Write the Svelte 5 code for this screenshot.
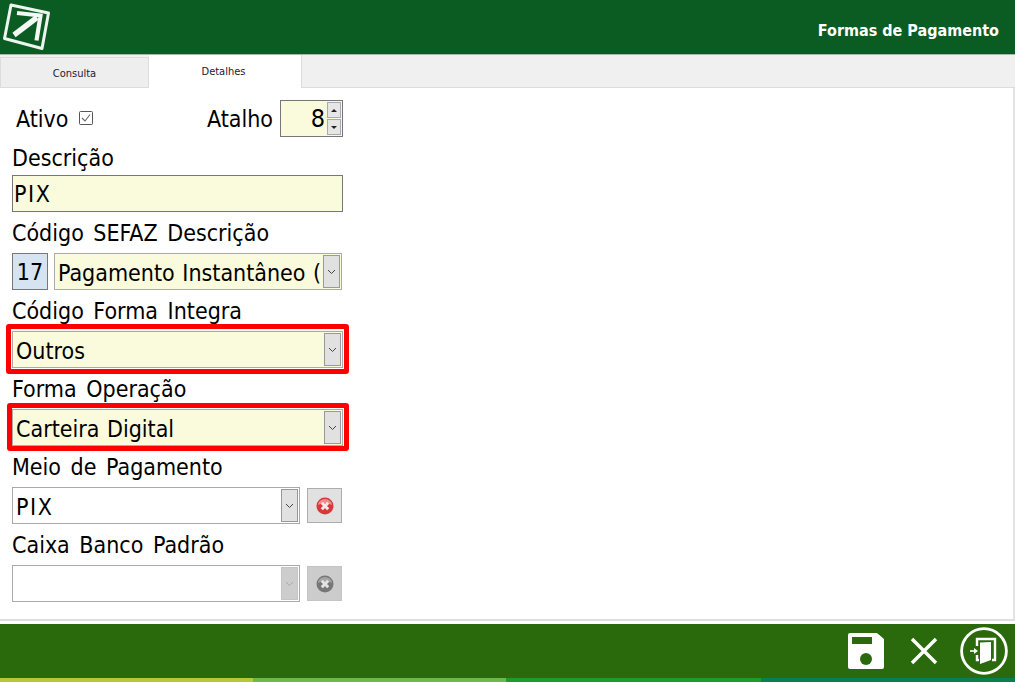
<script lang="ts">
  const chevron = 'M1 1 L4.5 4.5 L8 1';
</script>

<div class="app">
  <header class="top">
    <svg class="logo" width="56" height="54" viewBox="0 0 56 54">
      <path d="M11 5 L48.5 13 L42 48.5 L4.5 38.5 Z" fill="none" stroke="#eef4ef" stroke-width="3" stroke-linejoin="round" />
      <path d="M14 35 L37 17.5" stroke="#f4f8f4" stroke-width="5.4" fill="none" />
      <path d="M17 13 L40.5 15.5 L36.5 40.5" stroke="#f4f8f4" stroke-width="4.2" fill="none" />
    </svg>
    <div class="title">Formas de Pagamento</div>
  </header>

  <nav class="tabs">
    <div class="tab">Consulta</div>
    <div class="tab active">Detalhes</div>
  </nav>

  <main class="panel">
    <div class="first-row">
      <span class="lbl ativo">Ativo</span>
      <svg class="check" width="14" height="14" viewBox="0 0 14 14">
        <rect x="0.5" y="0.5" width="13" height="13" rx="1" fill="#fff" stroke="#555" />
        <path d="M3 7 L6 10 L11 3.5" fill="none" stroke="#666" stroke-width="1.1" />
      </svg>
      <span class="lbl atalho">Atalho</span>
      <div class="spin">
        <span class="spin-val">8</span>
        <div class="spin-btns">
          <button class="spin-btn" aria-label="up"><i class="up"></i></button>
          <button class="spin-btn" aria-label="down"><i class="down"></i></button>
        </div>
      </div>
    </div>

    <div class="lbl field-lbl first">Descrição</div>
    <div class="box input yellow dark"><span class="caps">PIX</span></div>

    <div class="lbl field-lbl">Código SEFAZ Descrição</div>
    <div class="row">
      <div class="box code dark">17</div>
      <div class="box select yellow grow">
        <span class="val">Pagamento Instantâneo (PIX)</span>
        <span class="arrow"><svg width="9" height="6" viewBox="0 0 9 6"><path d={chevron} fill="none" stroke="#444" /></svg></span>
      </div>
    </div>

    <div class="lbl field-lbl">Código Forma Integra</div>
    <div class="mark-wrap">
      <div class="box select yellow">
        <span class="val">Outros</span>
        <span class="arrow"><svg width="9" height="6" viewBox="0 0 9 6"><path d={chevron} fill="none" stroke="#444" /></svg></span>
      </div>
      <div class="mark mark-a"></div>
    </div>

    <div class="lbl field-lbl">Forma Operação</div>
    <div class="mark-wrap">
      <div class="box select yellow">
        <span class="val">Carteira Digital</span>
        <span class="arrow"><svg width="9" height="6" viewBox="0 0 9 6"><path d={chevron} fill="none" stroke="#444" /></svg></span>
      </div>
      <div class="mark mark-b"></div>
    </div>

    <div class="lbl field-lbl">Meio de Pagamento</div>
    <div class="row wide-gap">
      <div class="box select white grow">
        <span class="val caps">PIX</span>
        <span class="arrow"><svg width="9" height="6" viewBox="0 0 9 6"><path d={chevron} fill="none" stroke="#444" /></svg></span>
      </div>
      <button class="clear" aria-label="limpar">
        <svg width="18" height="18" viewBox="0 0 18 18">
          <circle cx="9" cy="9" r="8.5" fill="#d5393a" />
          <path d="M2 8 A7 6 0 0 1 16 8 A9 5 0 0 0 2 8" fill="#ee8c8c" />
          <path d="M5.8 5.8 L12.2 12.2 M12.2 5.8 L5.8 12.2" stroke="#f6e9e9" stroke-width="3" />
        </svg>
      </button>
    </div>

    <div class="lbl field-lbl">Caixa Banco Padrão</div>
    <div class="row wide-gap">
      <div class="box select white grow">
        <span class="val"></span>
        <span class="arrow off"><svg width="9" height="6" viewBox="0 0 9 6"><path d={chevron} fill="none" stroke="#aaa" /></svg></span>
      </div>
      <button class="clear off" aria-label="limpar">
        <svg width="18" height="18" viewBox="0 0 18 18">
          <circle cx="9" cy="9" r="8.5" fill="#777" />
          <path d="M2 8 A7 6 0 0 1 16 8 A9 5 0 0 0 2 8" fill="#a5a5a5" />
          <path d="M5.8 5.8 L12.2 12.2 M12.2 5.8 L5.8 12.2" stroke="#e4e4e4" stroke-width="3" />
        </svg>
      </button>
    </div>
  </main>

  <footer class="bottom">
    <svg width="36" height="36" viewBox="0 0 36 36">
      <path fill-rule="evenodd" d="M2 0 H29 L36 6 V34 a2 2 0 0 1 -2 2 H2 a2 2 0 0 1 -2 -2 V2 a2 2 0 0 1 2 -2 Z M4 4 V11 H24 V4 Z" fill="#fff" />
      <circle cx="18" cy="26" r="6" fill="#2b6a0c" />
    </svg>
    <svg class="close" width="30" height="30" viewBox="0 0 30 30">
      <path d="M3 3 L27 27 M27 3 L3 27" stroke="#fff" stroke-width="3.4" />
    </svg>
    <svg class="door" width="48" height="48" viewBox="0 0 48 48">
      <circle cx="24" cy="24" r="22.4" fill="none" stroke="#fff" stroke-width="2.8" />
      <path d="M17 19 V12 H35 V33 H32" fill="none" stroke="#fff" stroke-width="2.4" />
      <path d="M17 28 V33 H19" fill="none" stroke="#fff" stroke-width="2.4" />
      <path d="M20 15.5 L31 15 V33 L20 37 Z" fill="#fff" />
      <path d="M10 24 H15" stroke="#fff" stroke-width="1.6" />
      <path d="M14 21 L18 24 L14 27 Z" fill="#fff" />
    </svg>
  </footer>

  <div class="strip">
    <span class="s1"></span><span class="s2"></span><span class="s3"></span><span class="s4"></span>
  </div>
</div>

<style>
  :global(body) { margin: 0; background: #fff; }
  .app {
    width: 1015px;
    height: 682px;
    display: flex;
    flex-direction: column;
    overflow: hidden;
    font-family: "DejaVu Sans Condensed", "DejaVu Sans", sans-serif;
    color: #000;
  }

  .top {
    height: 54px;
    flex: none;
    background: #0a5c22;
    border-bottom: 1px solid #a9b5ac;
    display: flex;
    align-items: center;
    justify-content: space-between;
    padding-right: 16px;
  }
  .logo { display: block; }
  .title {
    color: #fff;
    font-weight: 700;
    font-size: 16px;
    margin-top: 6px;
  }

  .tabs {
    height: 33px;
    flex: none;
    background: #f0f0f0;
    display: flex;
    align-items: flex-end;
    box-sizing: border-box;
    border-bottom: 1px solid #dcdcdc;
  }
  .tab {
    width: 149px;
    height: 31px;
    margin-bottom: -1px;
    padding-top: 1px;
    box-sizing: border-box;
    border: 1px solid #dcdcdc;
    background: #eee;
    font-size: 11px;
    color: #1a1a30;
    display: flex;
    align-items: center;
    justify-content: center;
  }
  .tab.active {
    width: 153px;
    height: 33px;
    background: #fff;
    border-width: 0 1px 0 0;
    padding: 0 3px 1px 0;
  }

  .panel {
    flex: none;
    height: 533px;
    box-sizing: border-box;
    padding: 12px 0 0 12px;
    border-right: 2px solid #e2e2e2;
    border-bottom: 2px solid #dedede;
    margin-bottom: 3px;
    width: 100%;
  }

  .lbl { font-size: 23px; line-height: 28px; white-space: nowrap; word-spacing: 3px; }
  .first-row {
    width: 331px;
    height: 37px;
    display: flex;
    align-items: center;
  }
  .ativo { margin-left: 4px; }
  .check { margin-left: 10px; margin-top: -2px; }
  .atalho { margin-left: auto; margin-right: 7px; }
  .spin {
    width: 63px;
    height: 37px;
    box-sizing: border-box;
    border: 1px solid #777;
    background: #fafadc;
    display: flex;
    justify-content: flex-end;
    align-items: center;
  }
  .spin-val { font-size: 25px; padding-right: 2px; }
  .spin-btns { width: 15px; height: 100%; display: flex; flex-direction: column; gap: 1px; padding: 1px 1px 1px 0; box-sizing: border-box; }
  .spin-btn {
    flex: 1;
    min-height: 0;
    padding: 0;
    background: #e6e6e6;
    border: 1px solid #aaa;
    display: flex;
    align-items: center;
    justify-content: center;
  }
  .spin-btn i { width: 0; height: 0; border-left: 3px solid transparent; border-right: 3px solid transparent; }
  .spin-btn .up { border-bottom: 3px solid #222; }
  .spin-btn .down { border-top: 3px solid #222; }

  .field-lbl { height: 28px; margin-top: 7px; margin-bottom: 6px; }
  .field-lbl.first { margin-bottom: 3px; }

  .box {
    height: 37px;
    box-sizing: border-box;
    border: 1px solid #aaa;
    font-size: 23px;
    display: flex;
    align-items: center;
  }
  .dark { border-color: #777; }
  .input { width: 331px; padding-left: 1px; }
  .yellow { background: #fafadc; }
  .white { background: #fff; }

  .row { width: 330px; display: flex; gap: 6px; align-items: center; }
  .row.wide-gap { gap: 7px; }
  .code { width: 36px; background: #d6e3f1; justify-content: center; flex: none; }
  .grow { flex: 1; min-width: 0; }
  .select { padding: 1px 1px 1px 3px; gap: 1px; }
  .val { flex: 1; min-width: 0; white-space: nowrap; overflow: hidden; word-spacing: 1px; padding-top: 2px; }
  .caps { letter-spacing: 1.6px; }
  .arrow {
    flex: none;
    width: 17px;
    height: 100%;
    box-sizing: border-box;
    background: #e1e1e1;
    border: 1px solid #999;
    display: flex;
    align-items: center;
    justify-content: center;
  }
  .arrow.off { background: #cdcdcd; border-color: #c4c4c4; }

  .clear {
    flex: none;
    width: 35px;
    height: 35px;
    padding: 0;
    box-sizing: border-box;
    background: #e1e1e1;
    border: 1px solid #adadad;
    display: flex;
    align-items: center;
    justify-content: center;
  }
  .clear.off { background: #ccc; border-color: #c4c4c4; }

  .mark-wrap { position: relative; width: 331px; }
  .mark {
    position: absolute;
    box-sizing: border-box;
    border: 5px solid #f00;
    border-radius: 3px;
    pointer-events: none;
  }
  .mark-a { left: -6px; right: -6px; top: -7px; bottom: -6px; }
  .mark-b { left: -5px; right: -6px; top: -6px; bottom: -5px; }

  .bottom {
    height: 54px;
    flex: none;
    background: #2b6a0c;
    display: flex;
    align-items: center;
    justify-content: flex-end;
    padding-right: 7px;
  }
  .close { margin-left: 25px; }
  .door { margin-left: 21px; }

  .strip { height: 5px; flex: none; display: grid; grid-template-columns: 253px 253px 255px 1fr; }
  .s1 { background: #b5c83a; }
  .s2 { background: #6cb84a; }
  .s3 { background: #1f9a2c; }
  .s4 { background: #0c7f4e; }
</style>
